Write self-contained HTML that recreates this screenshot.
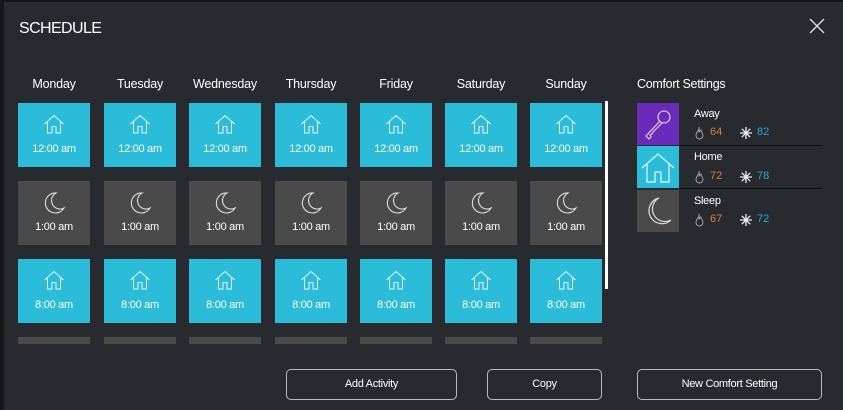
<!DOCTYPE html>
<html><head><style>
*{margin:0;padding:0;box-sizing:border-box}
body{width:843px;height:410px;background:#272a2e;font-family:"Liberation Sans",sans-serif;color:#fff;position:relative;overflow:hidden}
.edge{position:absolute;left:0;top:0;width:4px;height:410px;background:#15181b}
.topedge{position:absolute;left:0;top:0;width:843px;height:2px;background:#15181b}
.title{position:absolute;left:19px;top:20px;font-size:16px;letter-spacing:-0.6px}
.day{position:absolute;top:77px;width:72px;text-align:center;font-size:12.5px;letter-spacing:-0.2px}
.tile{position:absolute;width:72px;height:64px;text-align:center;font-size:11px}
.b{background:#2bbcda}.g{background:#4a4a4a}
.tile svg{position:absolute;left:24px;top:10px}
.tile span{position:absolute;left:0;right:0;top:40px;letter-spacing:-0.3px}
.stub{position:absolute;top:337px;width:72px;height:7px;background:#4a4a4a}
.sb{position:absolute;left:605px;top:101px;width:3px;height:188px;background:#fff}
.cs{position:absolute;left:637px;top:77px;font-size:12.5px;letter-spacing:-0.3px}
.ct{position:absolute;left:637px;width:42px;height:42px}
.cn{position:absolute;left:694px;font-size:11px;letter-spacing:-0.3px}
.o{color:#e57c31}.c{color:#2aa6d6}
.line{position:absolute;left:680px;width:142px;height:1px;background:#0e1012}
.btn{position:absolute;top:369px;height:31px;border:1px solid #bbb;border-radius:5px;font-size:11px;text-align:center;line-height:29px;letter-spacing:-0.3px}
.vals{position:absolute;left:694px;font-size:11px;height:14px}
.vals svg,.vals span{position:absolute;top:0}
</style></head><body>
<div class="edge"></div><div class="topedge"></div>
<div class="title">SCHEDULE</div>
<svg style="position:absolute;left:809px;top:18px" width="16" height="16"><path d="M1 1L15 15M15 1L1 15" stroke="#ddd" stroke-width="1.4"/></svg>

<div class="day" style="left:18px">Monday</div>
<div class="day" style="left:104px">Tuesday</div>
<div class="day" style="left:189px">Wednesday</div>
<div class="day" style="left:275px">Thursday</div>
<div class="day" style="left:360px">Friday</div>
<div class="day" style="left:445px">Saturday</div>
<div class="day" style="left:530px">Sunday</div>

<div id="grid"></div>
<script>
var xs=[18,104,189,275,360,445,530],h='';
var house='<svg width="24" height="22" viewBox="0 0 24 22"><path d="M2.5 11L12 2.5L21.5 11M5.5 8.5V20H10V13.5H14V20H18.5V8.5" fill="none" stroke="#e8f8fc" stroke-width="1"/></svg>';
var moon='<svg width="24" height="24" viewBox="0 0 24 24"><path d="M14 2A10 10 0 1 0 22 17A8 8 0 0 1 14 2Z" fill="none" stroke="#ddd" stroke-width="1.1"/></svg>';
xs.forEach(function(x){
h+='<div class="tile b" style="left:'+x+'px;top:103px">'+house+'<span>12:00 am</span></div>';
h+='<div class="tile g" style="left:'+x+'px;top:181px">'+moon+'<span>1:00 am</span></div>';
h+='<div class="tile b" style="left:'+x+'px;top:259px">'+house+'<span>8:00 am</span></div>';
h+='<div class="stub" style="left:'+x+'px"></div>';
});
document.getElementById('grid').innerHTML=h;
var flame='<svg style="left:0" width="11" height="14" viewBox="0 0 11 14"><path d="M5 1C6 4 2 6 2 9.5A3.5 3.5 0 0 0 9 9.5C9 7 7 6 7 4C6 5 5.5 6 5 6C5.5 4 5 2 5 1Z" fill="none" stroke="#aaa" stroke-width="0.9"/></svg>';
var snow='<svg style="left:45px" width="14" height="14" viewBox="0 0 14 14"><g stroke="#eee" stroke-width="1.3"><path d="M7 1V13M1 7H13M2.8 2.8L11.2 11.2M11.2 2.8L2.8 11.2"/></g></svg>';
[[126,'64','82'],[170,'72','78'],[213,'67','72']].forEach(function(v){
document.write('<div class="vals" style="top:'+v[0]+'px">'+flame+'<span class="o" style="left:16px">'+v[1]+'</span>'+snow+'<span class="c" style="left:63px">'+v[2]+'</span></div>');
});
</script>
<div class="sb"></div>

<div class="cs">Comfort Settings</div>
<div class="ct" style="top:103px;background:#6a2bb8"><svg width="42" height="42" viewBox="0 0 42 42"><circle cx="27" cy="14" r="6" fill="none" stroke="#e8d8ff" stroke-width="1.1"/><path d="M23 18L9 33L12 36L14 34L13 32L15 31L16 29L25 20" fill="none" stroke="#e8d8ff" stroke-width="1.1"/></svg></div>
<div class="ct" style="top:146px;background:#2bbcda"><svg width="42" height="42" viewBox="0 0 42 42"><path d="M5 22L21 8L37 22M10 18V36H18V26H24V36H32V18" fill="none" stroke="#e8f8fc" stroke-width="1.2"/></svg></div>
<div class="ct" style="top:190px;background:#4a4a4a"><svg width="42" height="42" viewBox="0 0 42 42"><path d="M22 8A13 13 0 1 0 34 30A11 11 0 0 1 22 8Z" fill="none" stroke="#ddd" stroke-width="1.2"/></svg></div>

<div class="cn" style="top:108px">Away</div>
<div class="cn" style="top:151px">Home</div>
<div class="cn" style="top:195px">Sleep</div>
<div class="line" style="top:145px"></div>
<div class="line" style="top:188px"></div>

<div class="btn" style="left:286px;width:171px">Add Activity</div>
<div class="btn" style="left:487px;width:115px">Copy</div>
<div class="btn" style="left:637px;width:185px">New Comfort Setting</div>
</body></html>
